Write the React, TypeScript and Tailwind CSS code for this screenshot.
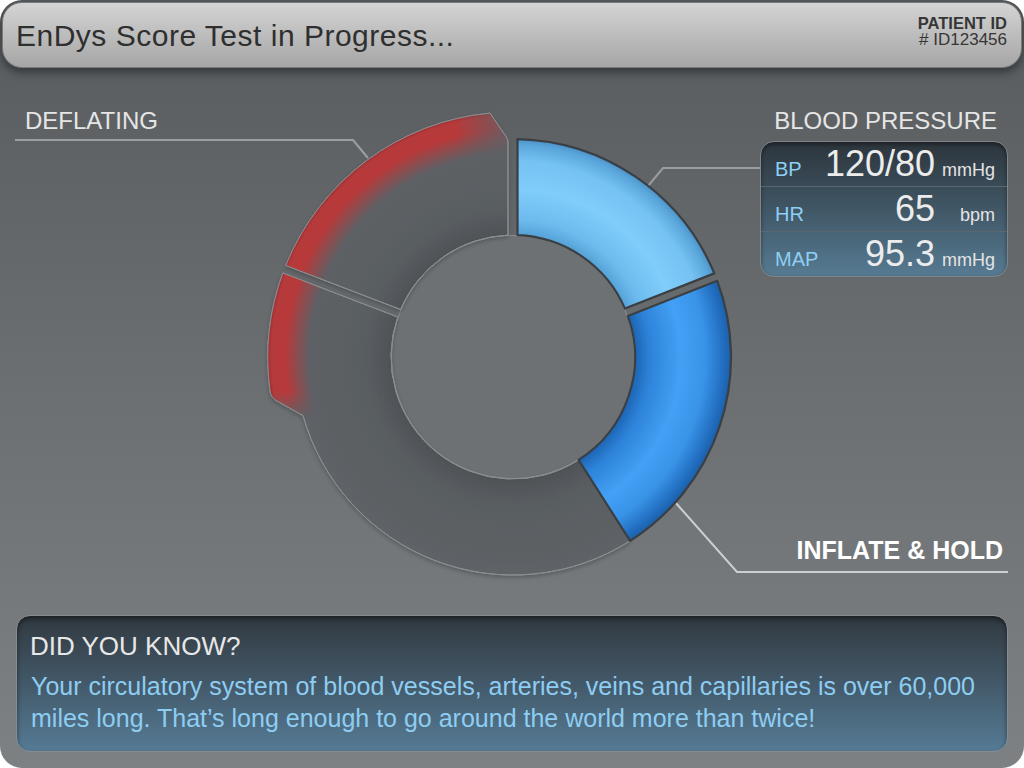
import React from "react";

const CX = 513;
const CY = 357;

function P(r: number, a: number): string {
  const t = (a * Math.PI) / 180;
  return `${(CX + r * Math.cos(t)).toFixed(2)} ${(CY + r * Math.sin(t)).toFixed(2)}`;
}
function g(r: number, half: number): number {
  return (Math.asin(half / r) * 180) / Math.PI;
}

const lightBluePath = `M ${P(218, -90 + g(218, 4.5))} A 218 218 0 0 1 ${P(218, -21.5 - g(218, 4))} L ${P(122, -21.5 - g(122, 4))} A 122 122 0 0 0 ${P(122, -90 + g(122, 4.5))} Z`;

const darkBluePath = `M ${P(218, -21.5 + g(218, 4))} A 218 218 0 0 1 ${P(218, 57.5)} L ${P(122, 57.5)} A 122 122 0 0 0 ${P(122, -21.5 + g(122, 4))} Z`;

const grayPath = `M ${P(218, 57.5)} A 218 218 0 0 1 ${P(218, 164.4)} L ${P(239, 169.2)} Q ${P(246, 170.3)} ${P(245.3, 172.3)} A 245 245 0 0 1 ${P(245, 201 - g(245, 4))} L ${P(122, 201 - g(122, 4))} A 122 122 0 0 0 ${P(122, 57.5)} Z`;

const bumpPath = `M ${P(122, 163)} L ${P(218, 164.4)} L ${P(239, 169.2)} Q ${P(246, 170.3)} ${P(245.3, 172.3)} A 245 245 0 0 1 ${P(245, 201 - g(245, 4))} L ${P(122, 201 - g(122, 4))} A 122 122 0 0 0 ${P(122, 163)} Z`;

const topLeftPath = `M ${P(245, 201 + g(245, 4))} A 245 245 0 0 1 490 113.1 L 506 136.5 Q 508 139.5 508 142 L 508 235.1 A 122 122 0 0 0 ${P(122, 201 + g(122, 4))} Z`;

function Donut() {
  return (
    <svg
      className="absolute inset-0"
      width={1024}
      height={547}
      viewBox="0 68 1024 547"
    >
      <defs>
        <radialGradient id="grayG" gradientUnits="userSpaceOnUse" cx={CX} cy={CY} r={245}>
          <stop offset="0.498" stopColor="#4e5256" />
          <stop offset="0.6" stopColor="#595d61" />
          <stop offset="1" stopColor="#606468" />
        </radialGradient>
        <radialGradient id="redG" gradientUnits="userSpaceOnUse" cx={CX} cy={CY} r={245}>
          <stop offset="0.83" stopColor="#b53a3b" stopOpacity="0" />
          <stop offset="0.93" stopColor="#b8393a" stopOpacity="1" />
          <stop offset="0.985" stopColor="#b63a3b" stopOpacity="1" />
          <stop offset="1" stopColor="#9e3133" stopOpacity="1" />
        </radialGradient>
        <linearGradient id="fadeV" gradientUnits="userSpaceOnUse" x1="0" y1="392" x2="0" y2="418">
          <stop offset="0" stopColor="#fff" />
          <stop offset="1" stopColor="#000" />
        </linearGradient>
        <linearGradient id="fadeH" gradientUnits="userSpaceOnUse" x1="455" y1="0" x2="508" y2="0">
          <stop offset="0" stopColor="#fff" />
          <stop offset="1" stopColor="#333" />
        </linearGradient>
        <mask id="maskV" maskUnits="userSpaceOnUse" x="0" y="68" width="1024" height="547">
          <rect x="0" y="68" width="1024" height="547" fill="url(#fadeV)" />
        </mask>
        <mask id="maskH" maskUnits="userSpaceOnUse" x="0" y="68" width="1024" height="547">
          <rect x="0" y="68" width="1024" height="547" fill="url(#fadeH)" />
        </mask>
        <radialGradient id="lbG" gradientUnits="userSpaceOnUse" cx={CX} cy={CY} r={218}>
          <stop offset="0.56" stopColor="#54a1d6" />
          <stop offset="0.63" stopColor="#6dbbee" />
          <stop offset="0.77" stopColor="#80cdfb" />
          <stop offset="0.9" stopColor="#75c2f3" />
          <stop offset="0.97" stopColor="#5ba7dc" />
          <stop offset="1" stopColor="#4b93c8" />
        </radialGradient>
        <radialGradient id="dbG" gradientUnits="userSpaceOnUse" cx={CX} cy={CY} r={218}>
          <stop offset="0.56" stopColor="#1c64b3" />
          <stop offset="0.63" stopColor="#2d83d9" />
          <stop offset="0.77" stopColor="#43a0f4" />
          <stop offset="0.88" stopColor="#3994e8" />
          <stop offset="0.96" stopColor="#2370c3" />
          <stop offset="1" stopColor="#1b5fa9" />
        </radialGradient>
        <filter id="sh" x="-10%" y="-10%" width="120%" height="120%">
          <feDropShadow dx="0" dy="2" stdDeviation="2" floodColor="#000" floodOpacity="0.25" />
        </filter>
      </defs>

      {/* leader lines */}
      <polyline points="15,140 353,140 368,158" fill="none" stroke="#9c9ea0" strokeWidth="2" />
      <polyline points="760,168 663,168 648,186" fill="none" stroke="#9a9c9e" strokeWidth="2" />
      <polyline points="675,502 737,572 1008,572" fill="none" stroke="#cdcecf" strokeWidth="2" />

      {/* inner circle */}
      <circle cx={CX} cy={CY} r={121.5} fill="#6e7174" stroke="#8d9093" strokeWidth="1" />

      <g filter="url(#sh)">
        <path d={grayPath} fill="url(#grayG)" stroke="#8a8d90" strokeWidth="1" />
        <path d={topLeftPath} fill="url(#grayG)" stroke="#8a8d90" strokeWidth="1" />
      </g>
      <path d={bumpPath} fill="url(#redG)" mask="url(#maskV)" />
      <path d={topLeftPath} fill="url(#redG)" mask="url(#maskH)" />
      <path d={grayPath} fill="none" stroke="#8a8d90" strokeWidth="1" />
      <path d={topLeftPath} fill="none" stroke="#8a8d90" strokeWidth="1" />

      <path d={darkBluePath} fill="url(#dbG)" stroke="#3a3f44" strokeWidth="2.2" strokeLinejoin="round" />
      <path d={lightBluePath} fill="url(#lbG)" stroke="#3a3f44" strokeWidth="2.2" strokeLinejoin="round" />
    </svg>
  );
}

function Row({
  label,
  value,
  unit,
  h,
  border,
}: {
  label: string;
  value: string;
  unit: string;
  h: string;
  border: boolean;
}) {
  return (
    <div
      className={`flex items-baseline pl-[14px] pr-[12px] pt-[4px] ${h} ${
        border ? "border-b border-[#5a6670]" : ""
      }`}
    >
      <span className="flex-none text-[20px] leading-none text-[#8dcff5]">{label}</span>
      <span className="min-w-0 flex-1 text-right text-[36px] leading-none text-[#ececec]">{value}</span>
      <span className="w-[60px] flex-none text-right text-[18px] leading-none text-[#e4e4e4]">{unit}</span>
    </div>
  );
}

export default function App() {
  return (
    <div className="h-[768px] w-[1024px] overflow-hidden rounded-[22px] bg-gradient-to-b from-[#575b5e] via-[#6c6f72] to-[#7e8184] font-['Liberation_Sans',Arial,sans-serif]">
      {/* header */}
      <div className="px-[2px] pt-[2px]">
        <div className="flex h-[66px] items-start justify-between rounded-[20px] border border-[#77797b] bg-gradient-to-b from-[#d4d4d4] to-[#a6a6a6] pl-[13px] pr-[14px] shadow-[0_4px_10px_rgba(0,0,0,0.45)]">
          <div className="mt-[18px] text-[30px] leading-none tracking-[0.5px] text-[#2f2f2f]">
            EnDys Score Test in Progress...
          </div>
          <div className="mt-[12px] flex flex-col items-end text-[#363636]">
            <div className="text-[16.5px] font-bold leading-[17px]">PATIENT ID</div>
            <div className="text-[17px] leading-[16px]"># ID123456</div>
          </div>
        </div>
      </div>

      {/* middle */}
      <div className="relative h-[547px]">
        <Donut />
        <div className="relative flex h-full justify-between">
          <div className="pl-[25px] pt-[41px] text-[24px] leading-none text-[#e6e6e6]">DEFLATING</div>
          <div className="flex flex-col items-end pr-[16px] pt-[41px]">
            <div className="pr-[11px] text-[24px] leading-none text-[#e6e6e6]">BLOOD PRESSURE</div>
            <div className="mt-[8px] h-[136px] w-[248px] overflow-hidden rounded-[14px] border border-[#7f8589] bg-gradient-to-b from-[#2c353c] to-[#567b93] shadow-[inset_0_2px_4px_rgba(0,0,0,0.45)]">
              <Row label="BP" value="120/80" unit="mmHg" h="h-[45px]" border />
              <Row label="HR" value="65" unit="bpm" h="h-[45px]" border />
              <Row label="MAP" value="95.3" unit="mmHg" h="h-[44px]" border={false} />
            </div>
            <div className="mb-[52px] mt-auto pr-[5px] text-[25px] font-bold leading-none text-white">
              INFLATE &amp; HOLD
            </div>
          </div>
        </div>
      </div>

      {/* did you know */}
      <div className="px-4 pb-4">
        <div className="h-[137px] rounded-[14px] border border-[#878c90] bg-gradient-to-b from-[#313940] to-[#557b95] pl-[13px] pt-[17px] shadow-[inset_0_3px_5px_rgba(0,0,0,0.45)]">
          <div className="text-[26px] leading-none text-[#e8e8e8]">DID YOU KNOW?</div>
          <div className="mt-[11px] pl-[1px] text-[25px] leading-[32px] text-[#8ecdf2]">
            Your circulatory system of blood vessels, arteries, veins and capillaries is over 60,000
            <br />
            miles long. That’s long enough to go around the world more than twice!
          </div>
        </div>
      </div>
    </div>
  );
}
